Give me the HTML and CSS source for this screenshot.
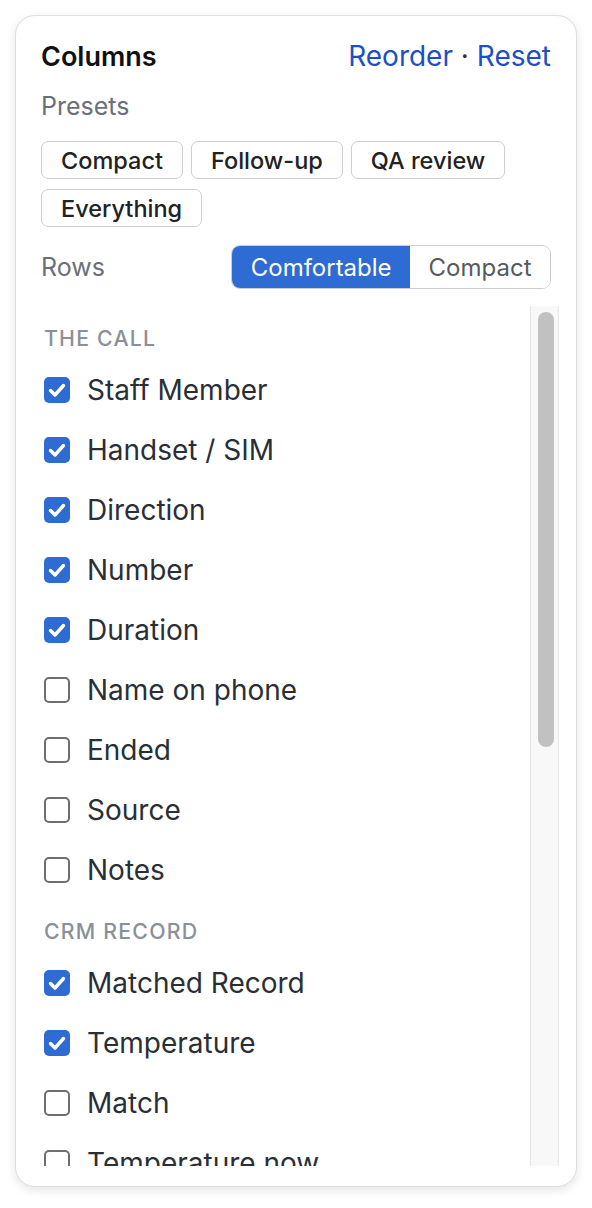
FILE: index.html
```html
<!DOCTYPE html>
<html lang="en">
<head>
    <meta charset="UTF-8">
    <meta name="viewport" content="width=device-width, initial-scale=1.0">
    <title>Columns</title>
    <link rel="stylesheet" href="styles.css">
</head>
<body>
    <div class="panel">
        <!-- Header -->
        <div class="panel-head">
            <h2>Columns</h2>
            <div class="head-links">
                <a href="#">Reorder</a> · <a href="#">Reset</a>
            </div>
        </div>

        <!-- Presets -->
        <div class="label presets-label">Presets</div>
        <div class="presets">
            <button>Compact</button>
            <button>Follow-up</button>
            <button>QA review</button>
            <button>Everything</button>
        </div>

        <!-- Row density -->
        <div class="rows">
            <span class="label">Rows</span>
            <div class="segmented">
                <button class="active">Comfortable</button>
                <button>Compact</button>
            </div>
        </div>

        <!-- Column list with its scrollbar -->
        <div class="list-wrap">
            <div class="col-list">
                <div class="group-title">The call</div>
                <label class="col-item"><input type="checkbox" checked> Staff Member</label>
                <label class="col-item"><input type="checkbox" checked> Handset / SIM</label>
                <label class="col-item"><input type="checkbox" checked> Direction</label>
                <label class="col-item"><input type="checkbox" checked> Number</label>
                <label class="col-item"><input type="checkbox" checked> Duration</label>
                <label class="col-item"><input type="checkbox"> Name on phone</label>
                <label class="col-item"><input type="checkbox"> Ended</label>
                <label class="col-item"><input type="checkbox"> Source</label>
                <label class="col-item"><input type="checkbox"> Notes</label>

                <div class="group-title">CRM record</div>
                <label class="col-item"><input type="checkbox" checked> Matched Record</label>
                <label class="col-item"><input type="checkbox" checked> Temperature</label>
                <label class="col-item"><input type="checkbox"> Match</label>
                <label class="col-item"><input type="checkbox"> Temperature now</label>
            </div>
            <div class="scrollbar">
                <div class="thumb"></div>
            </div>
        </div>
    </div>
</body>
</html>
```

FILE: styles.css
```css
/* Reset */
* {
    margin: 0;
    padding: 0;
    box-sizing: border-box;
}

body {
    font-family: Inter, "Noto Sans", sans-serif;
    background-color: #fff;
    color: #2a2f36;
}

/* Card */
.panel {
    margin: 15px;
    width: 562px;
    height: 1172px;
    display: flex;
    flex-direction: column;
    border: 1px solid #dedede;
    border-radius: 20px;
    padding: 23px 25px 20px 25px;
    background-color: #fff;
    box-shadow: 0 3px 10px rgba(0, 0, 0, 0.11);
}

.panel-head {
    display: flex;
    justify-content: space-between;
    align-items: center;
    height: 34px;
}

.panel-head h2 {
    font-size: 27px;
    font-weight: 600;
    color: #111;
}

.head-links {
    font-size: 28px;
    color: #333;
}

.head-links a {
    color: #1d4fc4;
    text-decoration: none;
}

.label {
    font-size: 25px;
    color: #6b7078;
}

.presets-label {
    margin-top: 18px;
    line-height: 30px;
}

/* Preset buttons */
.presets {
    display: flex;
    flex-wrap: wrap;
    gap: 10px 8px;
    margin-top: 20px;
}

.presets button {
    font-family: inherit;
    font-size: 23.5px;
    font-weight: 500;
    color: #222;
    background-color: #fff;
    border: 1.5px solid #cfcfcf;
    border-radius: 7px;
    height: 38px;
    padding: 0 19px;
}

/* Rows density */
.rows {
    display: flex;
    justify-content: space-between;
    align-items: center;
    margin-top: 18px;
}

.segmented {
    display: flex;
    border: 1.5px solid #c9cdd3;
    border-radius: 9px;
    overflow: hidden;
    height: 44px;
}

.segmented button {
    font-family: inherit;
    font-size: 24px;
    color: #555a61;
    background-color: #fff;
    border: none;
    padding: 0 18.5px;
}

.segmented button.active {
    background-color: #2e6bd2;
    color: #fff;
}

/* Scrolling column list */
.list-wrap {
    flex: 1;
    min-height: 0;
    display: flex;
    margin-top: 17px;
    margin-right: -8px;
}

.col-list {
    flex: 1;
    overflow: hidden;
    padding: 1px 0 0 3px;
}

.scrollbar {
    width: 29px;
    padding: 6px 4px 0 7px;
    background-color: #f8f8f8;
    border-left: 1px solid #e6e6e6;
    border-right: 1px solid #e9e9e9;
}

.thumb {
    height: 435px;
    border-radius: 8px;
    background-color: #c1c1c1;
}

.group-title {
    margin: 17px 0 8px 0;
    font-size: 21.3px;
    line-height: 28px;
    font-weight: 500;
    letter-spacing: 1.2px;
    text-transform: uppercase;
    color: #8b9098;
}

.col-item {
    display: flex;
    align-items: center;
    gap: 17px;
    height: 60px;
    font-size: 28px;
    color: #2a2f36;
}

.col-item input {
    appearance: none;
    width: 26px;
    height: 26px;
    flex-shrink: 0;
    border: 2px solid #6e6e6e;
    border-radius: 5px;
    background-color: #fff;
}

.col-item input:checked {
    border: none;
    background-color: #2e6bd2;
    background-image: url("data:image/svg+xml,%3Csvg xmlns='http://www.w3.org/2000/svg' viewBox='0 0 26 26'%3E%3Cpath d='M6.5 13.5l4.5 4.5 8.5-9.5' fill='none' stroke='white' stroke-width='3.4' stroke-linecap='round' stroke-linejoin='round'/%3E%3C/svg%3E");
}
```
